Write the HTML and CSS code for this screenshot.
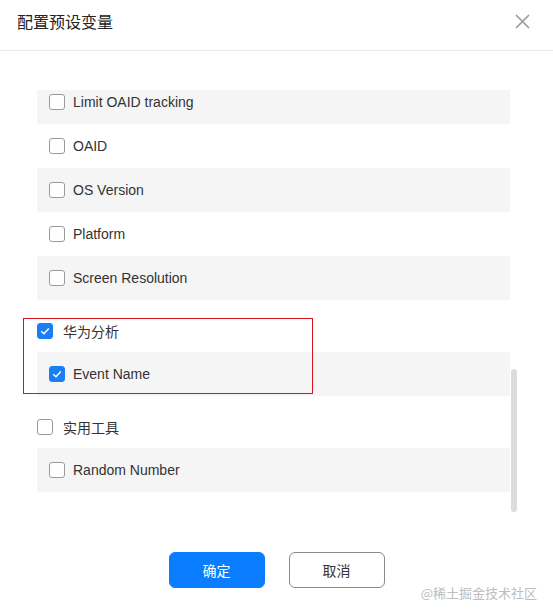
FILE: index.html
```html
<!DOCTYPE html>
<html lang="zh">
<head>
<meta charset="utf-8">
<title>配置预设变量</title>
<link rel="stylesheet" href="styles.css">
</head>
<body>
<div class="dialog">
  <div class="header">
    <span class="title">配置预设变量</span>
    <svg class="close" width="15" height="15" viewBox="0 0 15 15"><path d="M1 1L14 14M14 1L1 14" stroke="#999" stroke-width="1.6" fill="none"/></svg>
  </div>
  <div class="body">
    <div class="list">
      <div class="group first">
        <div class="row gray"><span class="cb"></span><span class="label">Limit OAID tracking</span></div>
        <div class="row"><span class="cb"></span><span class="label">OAID</span></div>
        <div class="row gray"><span class="cb"></span><span class="label">OS Version</span></div>
        <div class="row"><span class="cb"></span><span class="label">Platform</span></div>
        <div class="row gray"><span class="cb"></span><span class="label">Screen Resolution</span></div>
      </div>
      <div class="group">
        <div class="ghead"><span class="cb on"><svg viewBox="0 0 16 16" width="16" height="16"><path d="M4.2 8.2L7 10.8L11.8 5.6" stroke="#fff" stroke-width="1.5" fill="none"/></svg></span><span class="glabel">华为分析</span></div>
        <div class="row gray"><span class="cb on"><svg viewBox="0 0 16 16" width="16" height="16"><path d="M4.2 8.2L7 10.8L11.8 5.6" stroke="#fff" stroke-width="1.5" fill="none"/></svg></span><span class="label">Event Name</span></div>
      </div>
      <div class="group">
        <div class="ghead"><span class="cb"></span><span class="glabel">实用工具</span></div>
        <div class="row gray"><span class="cb"></span><span class="label">Random Number</span></div>
      </div>
      <div class="thumb"></div>
    </div>
  </div>
  <div class="footer">
    <button class="btn primary">确定</button>
    <button class="btn">取消</button>
  </div>
  <div class="mark"></div>
  <div class="watermark">@稀土掘金技术社区</div>
</div>
</body>
</html>
```
FILE: styles.css
```css
* { box-sizing: border-box; }
html, body { margin: 0; padding: 0; background: #fff; }
body {
  font-family: "Liberation Sans", Arial, "Noto Sans CJK SC", sans-serif;
  color: #333;
  width: 553px;
  height: 616px;
  overflow: hidden;
}
.dialog { position: relative; width: 553px; height: 616px; }
.header {
  height: 51px;
  border-bottom: 1px solid #e8e8e8;
  display: flex;
  align-items: center;
  justify-content: space-between;
  padding: 0 23px 8px 17px;
}
.title {
  font-family: "Noto Sans CJK SC", sans-serif;
  font-size: 16px;
  color: #222;
}
.close { display: block; margin-top: 1px; }
.body { padding: 39px 35px 0 37px; }
.list {
  position: relative;
  height: 424px;
  overflow: hidden;
  padding-bottom: 22px;
}
.group { position: relative; margin-top: 14px; }
.group.first { margin-top: -10px; }
.row {
  height: 44px;
  display: flex;
  align-items: center;
  padding-left: 12px;
  margin-right: 8px;
}
.row.gray { background: #f5f5f5; }
.ghead {
  height: 38px;
  display: flex;
  align-items: center;
  padding-bottom: 4px;
}
.cb {
  width: 16px;
  height: 16px;
  border: 1px solid #9a9a9a;
  border-radius: 3px;
  background: #fff;
  flex: none;
  position: relative;
}
.cb.on { background: #1a7ff5; border-color: #1a7ff5; }
.cb svg { position: absolute; left: -1px; top: -1px; }
.label { margin-left: 8px; font-size: 14px; color: #333; }
.glabel {
  margin-left: 10px;
  font-family: "Noto Sans CJK SC", sans-serif;
  font-size: 14px;
  color: #333;
}
.mark {
  position: absolute;
  left: 23px;
  top: 318px;
  width: 290px;
  height: 76px;
  border: 1px solid #d4161b;
  pointer-events: none;
}
.thumb {
  position: absolute;
  right: 1px;
  top: 279px;
  width: 6px;
  height: 143px;
  border-radius: 3px;
  background: #dcdcdc;
}
.footer {
  display: flex;
  justify-content: center;
  gap: 24px;
  margin-top: 38px;
}
.btn {
  width: 96px;
  height: 36px;
  border: 1px solid #8a8a8a;
  border-radius: 6px;
  background: #fff;
  font-family: "Noto Sans CJK SC", sans-serif;
  font-size: 14px;
  color: #333;
  padding: 0;
}
.btn.primary { background: #0a7dff; border-color: #0a7dff; color: #fff; }
.watermark {
  position: absolute;
  right: 16px;
  bottom: 14px;
  font-family: "Noto Sans CJK SC", sans-serif;
  font-size: 13px;
  color: #bdbdbd;
}
```
